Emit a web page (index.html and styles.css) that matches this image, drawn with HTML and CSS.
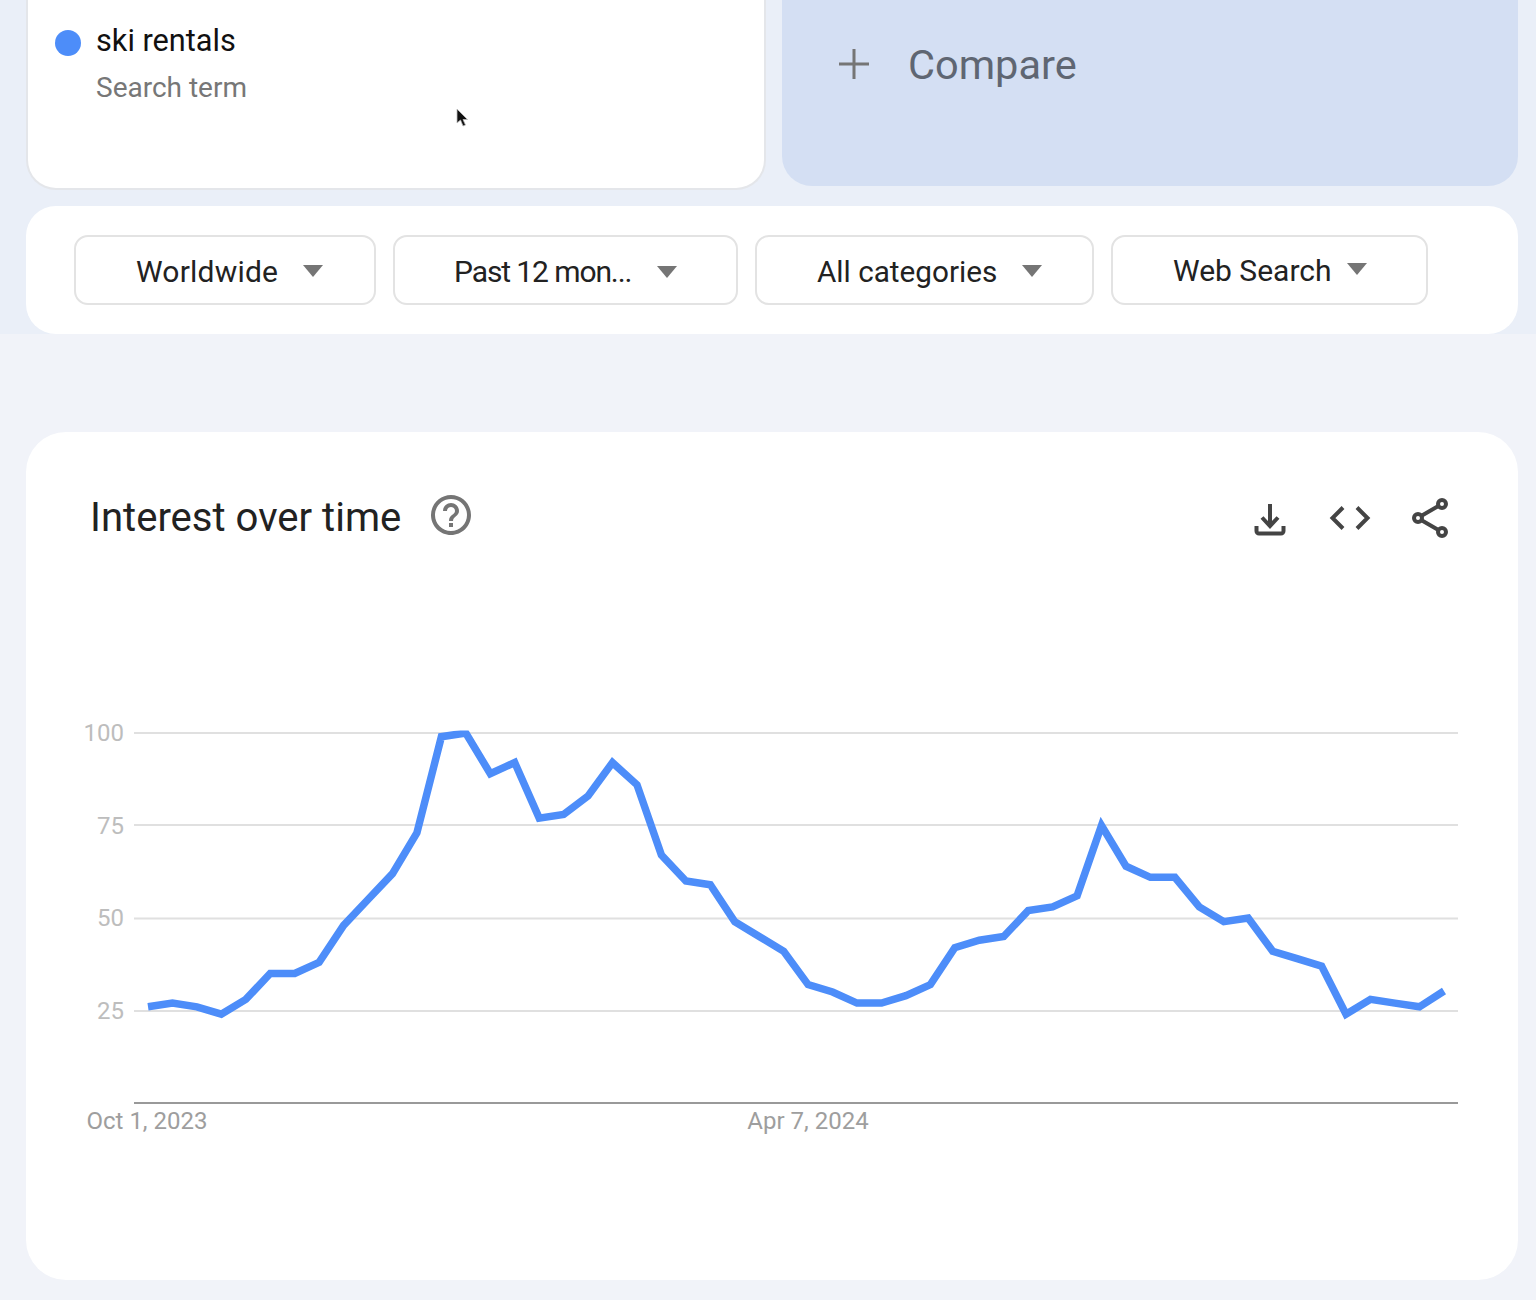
FILE: index.html
```html
<!DOCTYPE html>
<html lang="en">
<head>
<meta charset="utf-8">
<title>Google Trends - ski rentals</title>
<link rel="stylesheet" href="styles.css">
</head>
<body>
<header class="top">
  <div class="terms">
    <div class="term-card">
      <div class="term">
        <span class="dot"></span>
        <div>
          <div class="term-name">ski rentals</div>
          <div class="term-kind">Search term</div>
        </div>
      </div>
      <svg class="cursor" viewBox="0 0 14 20" width="14" height="20"><path d="M2 1v14l3.500-3 2.500 6 2.500-1-2.500-5.500h4.500z" fill="#111" stroke="#bbb" stroke-width=".8"/></svg>
    </div>
    <div class="compare">
      <svg class="plus" viewBox="0 0 30 30" width="30" height="30"><path d="M15 0v30M0 15h30" stroke="#757575" stroke-width="3" fill="none"/></svg>
      <span class="compare-text">Compare</span>
    </div>
  </div>
  <div class="filters">
    <div class="chip chip-geo"><span class="chip-label">Worldwide</span><span class="caret"></span></div>
    <div class="chip chip-time"><span class="chip-label">Past 12 mon...</span><span class="caret"></span></div>
    <div class="chip chip-cat"><span class="chip-label">All categories</span><span class="caret"></span></div>
    <div class="chip chip-web"><span class="chip-label">Web Search</span><span class="caret"></span></div>
  </div>
</header>
<main class="panel">
  <div class="panel-head">
    <h2 class="panel-title">Interest over time</h2>
    <svg class="help" viewBox="0 0 24 24" width="48" height="48"><path fill="#757575" d="M11 18h2v-2h-2v2zm1-16C6.480 2 2 6.480 2 12s4.480 10 10 10 10-4.480 10-10S17.520 2 12 2zm0 18c-4.410 0-8-3.590-8-8s3.590-8 8-8 8 3.590 8 8-3.590 8-8 8zm0-14c-2.210 0-4 1.790-4 4h2c0-1.100.9-2 2-2s2 .9 2 2c0 2-3 1.750-3 5h2c0-2.250 3-2.500 3-5 0-2.210-1.790-4-4-4z"/></svg>
    <div class="actions">
      <svg class="action" viewBox="0 0 48 48"><path d="M24 10v22M16 23.500l8 8.500 8-8.500M10.500 32v5a2.500 2.500 0 0 0 2.500 2.500h22a2.500 2.500 0 0 0 2.500-2.500v-5"/></svg>
      <svg class="action" viewBox="0 0 48 48"><path d="M17 13.500 6.500 24 17 34.500M31 13.500 41.500 24 31 34.500"/></svg>
      <svg class="action" viewBox="0 0 48 48"><path d="M16 21.500 32 12.200M16 26.500 32 35.800"/><circle cx="36" cy="10" r="4"/><circle cx="12" cy="24" r="4"/><circle cx="36" cy="38" r="4"/></svg>
    </div>
  </div>
  <svg class="chart" viewBox="26 700 1492 450" width="1492" height="450">
    <defs>
      <clipPath id="plot"><rect x="134" y="730.500" width="1324" height="372"/></clipPath>
    </defs>
    <g class="grid">
      <line x1="134" x2="1458" y1="733" y2="733"/>
      <line x1="134" x2="1458" y1="825" y2="825"/>
      <line x1="134" x2="1458" y1="918.500" y2="918.500"/>
      <line x1="134" x2="1458" y1="1011" y2="1011"/>
    </g>
    <line class="axis" x1="134" x2="1458" y1="1103" y2="1103"/>
    <g class="y-labels">
      <text x="124" y="741">100</text>
      <text x="124" y="834">75</text>
      <text x="124" y="926">50</text>
      <text x="124" y="1019">25</text>
    </g>
    <g class="x-labels">
      <text x="147" y="1129">Oct 1, 2023</text>
      <text x="808" y="1129">Apr 7, 2024</text>
    </g>
    <polyline class="trend" points="148,1006.800 172.450,1003.100 196.900,1006.800 221.300,1014.200 245.800,999.400 270.200,973.500 294.700,973.500 319.100,962.400 343.600,925.400 368,899.500 392.500,873.600 416.900,832.900 441.400,736.700 465.800,733 490.300,773.700 514.700,762.600 539.200,818.100 563.600,814.400 588.100,795.900 612.500,762.600 637,784.800 661.400,855.100 685.900,881 710.300,884.700 734.800,921.700 759.200,936.500 783.700,951.300 808.100,984.600 832.600,992 857,1003.100 881.500,1003.100 905.900,995.700 930.400,984.600 954.800,947.600 979.300,940.200 1003.700,936.500 1028.200,910.600 1052.600,906.900 1077.100,895.800 1101.500,825.500 1126,866.200 1150.400,877.300 1174.900,877.300 1199.300,906.900 1223.800,921.700 1248.200,918 1272.700,951.300 1297.100,958.700 1321.600,966.100 1346,1014.200 1370.500,999.400 1394.900,1003.100 1419.400,1006.800 1444,991"/>
  </svg>
</main>
</body>
</html>
```
FILE: styles.css
```css
* { box-sizing: border-box; }
html, body { margin: 0; padding: 0; }
body {
  height: 1300px;
  overflow: hidden;
  background: #f1f3f9;
  font-family: "Roboto", "Liberation Sans", sans-serif;
}
.top {
  height: 334px;
  background: #eaeff8;
  padding: 0 18px 0 26px;
}
.terms {
  display: flex;
  align-items: flex-start;
  gap: 16px;
  height: 206px;
}
.term-card {
  position: relative;
  width: 740px;
  height: 190px;
  background: #fff;
  border: 2px solid #e4e6ea;
  border-top: 0;
  border-radius: 0 0 30px 30px;
  padding: 21px 0 0 27px;
}
.term { display: flex; gap: 15px; }
.dot {
  width: 26px;
  height: 26px;
  margin-top: 9px;
  border-radius: 50%;
  background: #4d8df9;
  flex: none;
}
.term-name {
  font-size: 30.700px;
  line-height: 40px;
  color: #111;
}
.term-kind {
  font-size: 28px;
  line-height: 36px;
  margin-top: 9px;
  color: #777;
}
.cursor {
  position: absolute;
  left: 427px;
  top: 108px;
}
.compare {
  width: 736px;
  height: 186px;
  background: #d4dff3;
  border-radius: 0 0 30px 30px;
  display: flex;
  align-items: flex-start;
  padding: 49px 0 0 57px;
  gap: 39px;
}
.plus { flex: none; }
.compare-text {
  font-size: 41.500px;
  line-height: 32px;
  color: #5f6672;
}
.filters {
  height: 128px;
  background: #fff;
  border-radius: 30px;
  display: flex;
  align-items: flex-start;
  gap: 17px;
  padding: 29px 0 0 48px;
}
.chip {
  height: 70px;
  background: #fff;
  border: 2px solid #e3e3e3;
  border-radius: 14px;
  display: flex;
  align-items: center;
  gap: 25px;
  padding-left: 60px;
  flex: none;
}
.chip-geo { width: 302px; }
.chip-time { width: 345px; padding-left: 59px; gap: 26px; }
.chip-cat { width: 339px; }
.chip-web { width: 317px; gap: 15px; }
.chip-label {
  font-size: 30px;
  margin-top: 3px;
  color: #222;
  white-space: nowrap;
}
.chip-geo .chip-label { letter-spacing: 0.200px; }
.chip-time .chip-label { letter-spacing: -1.100px; }
.chip-cat .chip-label { font-size: 29.700px; }
.chip-web .chip-label { margin-top: 1px; }
.caret {
  width: 0;
  height: 0;
  border-left: 10.500px solid transparent;
  border-right: 10.500px solid transparent;
  border-top: 12px solid #757575;
  margin-top: 2px;
}
.chip-time .caret { margin-top: 4px; }
.chip-web .caret { margin-top: -2px; }
.panel {
  width: 1492px;
  height: 848px;
  margin: 98px 0 0 26px;
  background: #fff;
  border-radius: 40px;
}
.panel-head {
  display: flex;
  align-items: center;
  height: 110px;
  padding: 62px 64px 0 64px;
}
.panel-title {
  margin: 0;
  font-size: 40.100px;
  line-height: 48px;
  font-weight: 400;
  color: #222;
}
.help { margin: 0 0 6px 26px; flex: none; }
.actions {
  display: flex;
  gap: 32px;
  margin-left: auto;
}
.action {
  width: 48px;
  height: 48px;
  fill: none;
  stroke: #444;
  stroke-width: 4;
}
.chart {
  display: block;
  margin-top: 158px;
}
.grid line { stroke: #e0e0e0; stroke-width: 2; }
.axis { stroke: #999; stroke-width: 2; }
.y-labels text {
  font-size: 24px;
  fill: #bdbdbd;
  text-anchor: end;
}
.x-labels text {
  font-size: 24px;
  fill: #9e9e9e;
  text-anchor: middle;
}
.trend {
  fill: none;
  stroke: #4d8df9;
  stroke-width: 7.500;
  stroke-linejoin: miter;
  clip-path: url(#plot);
}
```
